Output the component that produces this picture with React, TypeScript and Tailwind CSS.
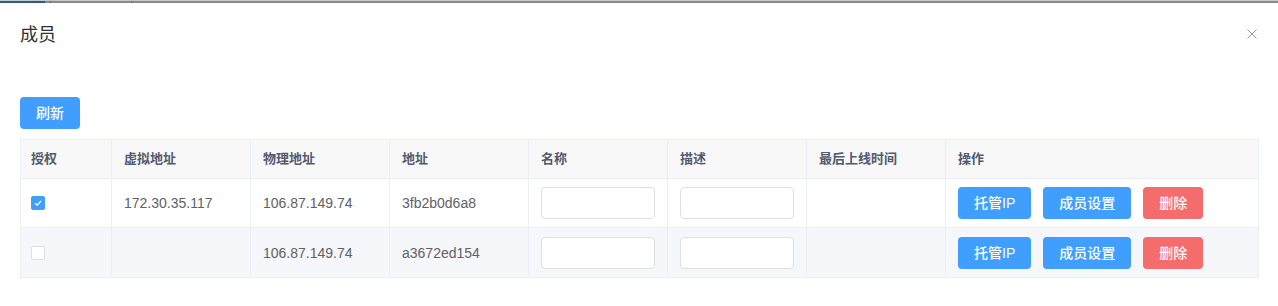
import { useState } from "react";

interface Member {
  id: number;
  authorized: boolean;
  virtualIp: string;
  physicalIp: string;
  address: string;
  lastOnline: string;
}

const members: Member[] = [
  { id: 1, authorized: true, virtualIp: "172.30.35.117", physicalIp: "106.87.149.74", address: "3fb2b0d6a8", lastOnline: "" },
  { id: 2, authorized: false, virtualIp: "", physicalIp: "106.87.149.74", address: "a3672ed154", lastOnline: "" },
];

const headers = ["授权", "虚拟地址", "物理地址", "地址", "名称", "描述", "最后上线时间", "操作"];

function Checkbox({ checked, onChange }: { checked: boolean; onChange: () => void }) {
  return (
    <button
      onClick={onChange}
      className={
        checked
          ? "w-[14px] h-[14px] rounded-[2px] bg-[#409eff] border border-[#409eff] flex items-center justify-center"
          : "w-[14px] h-[14px] rounded-[2px] bg-white border border-[#dcdfe6]"
      }
    >
      {checked && (
        <svg width="10" height="10" viewBox="0 0 10 10" fill="none">
          <path d="M2 5.2 L4.2 7.2 L8 3" stroke="white" strokeWidth="1.3" />
        </svg>
      )}
    </button>
  );
}

export default function App() {
  const [rows, setRows] = useState(members);

  const toggle = (id: number) => {
    setRows(rows.map((r) => (r.id === id ? { ...r, authorized: !r.authorized } : r)));
  };

  const cell = "border-r border-[#ebeef5] flex items-center pl-3";

  return (
    <div
      className="w-full h-[306px] bg-white"
      style={{ fontFamily: '"Liberation Sans", "Noto Sans CJK SC", sans-serif' }}
    >
      {/* top strip of the page behind the dialog */}
      <div className="h-[3px] flex bg-[#8a8a8a] border-t border-[#c8c8c8]">
        <div className="w-[45px] bg-[#2a5a8e]" />
        <div className="w-[5px]" />
        <div className="w-px bg-[#6f6f6f]" />
        <div className="w-[80px]" />
        <div className="w-px bg-[#6f6f6f]" />
      </div>

      {/* dialog header */}
      <div className="flex items-center justify-between pl-5 pr-[21px] pt-5">
        <span className="text-[18px] leading-6 text-[#303133]">成员</span>
        <svg width="10" height="10" viewBox="0 0 10 10" className="mt-[-2px]">
          <path d="M0.5 0.5 L9.5 9.5 M9.5 0.5 L0.5 9.5" stroke="#909399" strokeWidth="1" />
        </svg>
      </div>

      {/* dialog body */}
      <div className="px-5 mt-[50px]">
        <button className="w-[60px] h-8 rounded bg-[#409eff] text-white text-sm font-medium">刷新</button>

        <div className="mt-[10px] w-[1239px] border border-[#ebeef5] text-[#606266]">
          <div className="grid grid-cols-[91px_repeat(6,139px)_1fr] h-[39px] bg-[#f8f8f9] border-b border-[#ebeef5] text-[13px] font-bold text-[#515a6e]">
            {headers.map((h, i) => (
              <div
                key={h}
                className={
                  i === 0
                    ? "border-r border-[#ebeef5] flex items-center pl-[10px]"
                    : i === headers.length - 1
                    ? "flex items-center pl-3"
                    : cell
                }
              >
                {h}
              </div>
            ))}
          </div>

          {rows.map((m, idx) => (
            <div
              key={m.id}
              className={
                idx % 2 === 1
                  ? "grid grid-cols-[91px_repeat(6,139px)_1fr] h-[49px] bg-[#f5f7fa] text-sm"
                  : "grid grid-cols-[91px_repeat(6,139px)_1fr] h-[49px] bg-white border-b border-[#ebeef5] text-sm"
              }
            >
              <div className="border-r border-[#ebeef5] flex items-center pl-[10px]">
                <Checkbox checked={m.authorized} onChange={() => toggle(m.id)} />
              </div>
              <div className={cell}>{m.virtualIp}</div>
              <div className={cell}>{m.physicalIp}</div>
              <div className={cell}>{m.address}</div>
              <div className={cell}>
                <input className="w-[114px] h-8 rounded border border-[#dcdfe6] bg-white outline-none px-2" />
              </div>
              <div className={cell}>
                <input className="w-[114px] h-8 rounded border border-[#dcdfe6] bg-white outline-none px-2" />
              </div>
              <div className={cell}>{m.lastOnline}</div>
              <div className="flex items-center gap-3 pl-3">
                <button className="h-8 px-4 rounded bg-[#409eff] text-white text-sm font-medium">托管IP</button>
                <button className="h-8 px-4 rounded bg-[#409eff] text-white text-sm font-medium">成员设置</button>
                <button className="h-8 px-4 rounded bg-[#f56c6c] text-white text-sm font-medium">删除</button>
              </div>
            </div>
          ))}
        </div>
      </div>
    </div>
  );
}
